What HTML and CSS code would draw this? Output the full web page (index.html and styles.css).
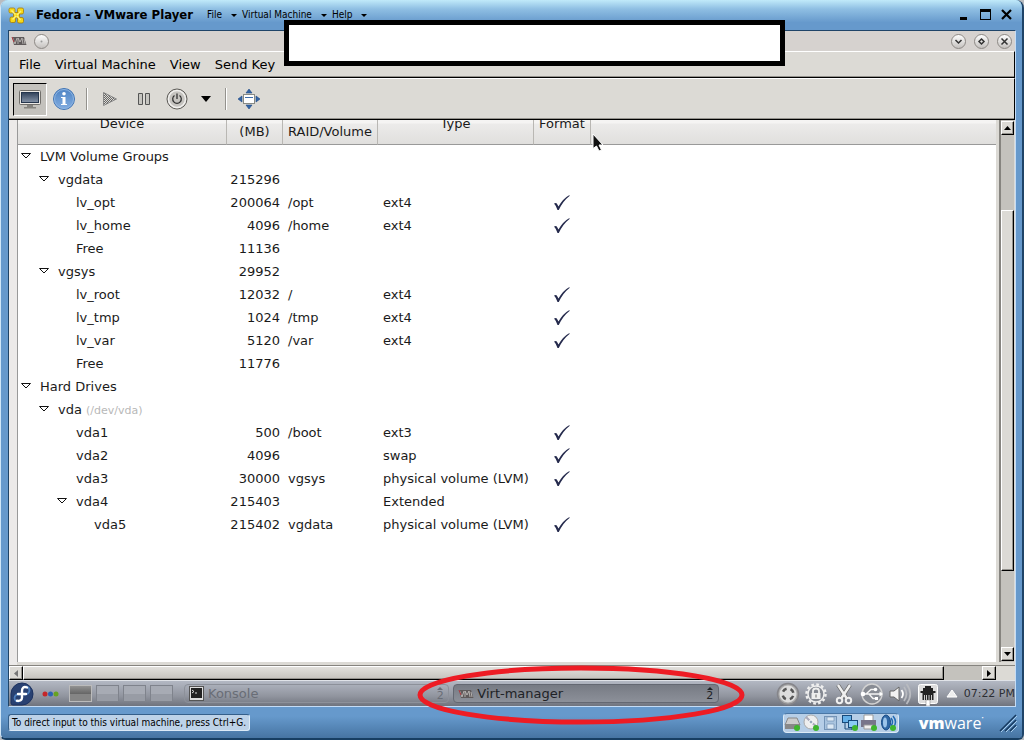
FILE: index.html
```html
<!DOCTYPE html>
<html lang="en">
<head>
<meta charset="utf-8">
<title>Fedora - VMware Player</title>
<link rel="stylesheet" href="styles.css">
</head>
<body>
<svg width="0" height="0" class="defs" aria-hidden="true">
  <defs>
    <linearGradient id="screen" x1="0" y1="0" x2="0" y2="1"><stop offset="0" stop-color="#31425a"/><stop offset="1" stop-color="#8794a8"/></linearGradient>
    <linearGradient id="info" x1="0" y1="0" x2="0" y2="1"><stop offset="0" stop-color="#4d83c4"/><stop offset="1" stop-color="#83ade0"/></linearGradient>
    <pattern id="dots" width="2" height="2" patternUnits="userSpaceOnUse"><path d="M0 0h1v1H0zM1 1h1v1H1z" fill="#666"/></pattern>
    <symbol id="check" viewBox="0 0 16 16"><path d="M0 8.500Q2 7.500 2.800 8.500L4.500 11.500Q9 3.500 15.500 0V1Q9 6 4.800 15H3.500Q2 10.500 0 8.500Z" fill="#262b4d"/></symbol>
    <symbol id="tri" viewBox="0 0 12 8"><path d="M1.500 1.500H10.500L6 6Z" fill="#fff" stroke="#111" stroke-width="1"/></symbol>
    <symbol id="vmm" viewBox="0 0 16 10"><path d="M1 1H13L15.500 9H3Z" fill="#5f5a5b"/><path d="M1.500 1.500L4 8L6 2M7 8V2L9 6L11 2L12 8M13 3L14 8" fill="none" stroke="#c9c5c3" stroke-width=".8"/><path d="M1 1L3 6" stroke="#ac343b"/></symbol>
  </defs>
</svg>
<div class="window">
  <header class="titlebar">
    <svg class="vmlogo" width="17" height="17" viewBox="0 0 17 17"><g fill="#f7d917" stroke="#a67b09" stroke-width=".8"><rect x="1" y="1" width="6" height="5" rx="1.500"/><rect x="9.500" y="1" width="6" height="6" rx="1.500"/><rect x="5.500" y="5.500" width="6" height="5.500" rx="1.500"/><rect x="2" y="10" width="5.500" height="5.500" rx="1.500"/><rect x="9.500" y="10.500" width="6" height="5.500" rx="1.500"/></g><path d="M3.500 3.500L7.500 7.500M13 4L9 8M4.500 12.500L8 9M12.500 13L9 9" stroke="#fff27a" stroke-width="1.500"/></svg>
    <h1>Fedora - VMware Player</h1>
    <nav class="hostmenu">
      <button>File<i></i></button><button>Virtual Machine<i></i></button><button>Help<i></i></button>
    </nav>
    <div class="winctl">
      <button aria-label="Minimize"><svg width="12" height="12"><path d="M1 8h7v3H1z"/></svg></button>
      <button aria-label="Maximize"><svg width="12" height="12"><path d="M0 0H11V11H0ZM1 3V10H10V3Z" fill-rule="evenodd"/></svg></button>
      <button aria-label="Close"><svg width="12" height="12"><path d="M1 1L10 10M10 1L1 10" stroke="#000" stroke-width="2.200"/></svg></button>
    </div>
  </header>

  <main class="guest">
    <div class="guesttitle">
      <svg width="16" height="10"><use href="#vmm"/></svg>
      <button class="round" aria-label="Pin"><svg width="9" height="9"><circle cx="4.500" cy="4.500" r="1" fill="#999"/></svg></button>
      <span class="spacer"></span>
      <button class="round" aria-label="Minimize guest"><svg width="9" height="9"><path d="M1.500 3L4.500 6L7.500 3" fill="none" stroke="#333" stroke-width="1.500"/></svg></button>
      <button class="round" aria-label="Maximize guest"><svg width="9" height="9"><path d="M4.500 2L7 4.500L4.500 7L2 4.500Z" fill="none" stroke="#333" stroke-width="1.500"/></svg></button>
      <button class="round" aria-label="Close guest"><svg width="9" height="9"><path d="M1.500 1.500L7.500 7.500M7.500 1.500L1.500 7.500" stroke="#333" stroke-width="1.500"/></svg></button>
    </div>
    <nav class="guestmenu"><button>File</button><button>Virtual Machine</button><button>View</button><button>Send Key</button></nav>
    <div class="toolbar">
      <button class="pressed" aria-label="Console"><svg width="24" height="22" viewBox="0 0 24 22"><rect x="1.500" y="2.500" width="21" height="14" rx="1" fill="#ece9e4" stroke="#706e6a"/><rect x="3.500" y="4.500" width="17" height="10" fill="url(#screen)" stroke="#26364d"/><path d="M9 17H15V19H18V20.500H6V19H9Z" fill="#86847f"/></svg></button>
      <button class="infobtn" aria-label="Details"><svg width="22" height="22" viewBox="0 0 22 22"><circle cx="11" cy="11" r="10.500" fill="url(#info)" stroke="#4275b4"/><circle cx="11" cy="11" r="9.500" fill="none" stroke="#8eb4e0"/><path d="M8 9H12.500V16H14V17H8V16H9.500V10H8Z" fill="#fff"/><circle cx="11" cy="5.700" r="1.800" fill="#fff"/></svg></button>
      <span class="sep"></span>
      <button class="play" aria-label="Run"><svg width="16" height="16"><path d="M1.500 1.500L14.500 8L1.500 14.500Z" fill="url(#dots)" stroke="#888"/></svg></button>
      <button class="pause" aria-label="Pause"><svg width="14" height="14"><path d="M1.500 1.500H5.500V12.500H1.500ZM8.500 1.500H12.500V12.500H8.500Z" fill="#c6c5c0" stroke="#555"/></svg></button>
      <button class="power" aria-label="Shut down"><svg width="22" height="22" viewBox="0 0 22 22"><circle cx="11" cy="11" r="10" fill="#c6c4c0" stroke="#5d5b57"/><circle cx="11" cy="11" r="8.500" fill="none" stroke="#f1f0ee" stroke-width="1.500"/><path d="M8.500 7.500A4.300 4.300 0 1 0 13.500 7.500M11 5.500V11" fill="none" stroke="#333" stroke-width="1.300"/></svg></button>
      <button class="drop" aria-label="Shutdown options"><svg width="10" height="6"><path d="M0 0H10L5 6Z"/></svg></button>
      <span class="sep"></span>
      <button class="full" aria-label="Full screen"><svg width="22" height="20" viewBox="0 0 22 20"><path d="M11 0L14 4H8ZM11 20L14 16H8ZM0 10L4 7V13ZM22 10L18 7V13Z" fill="#3465a4" stroke="#204a87" stroke-width=".6"/><rect x="5.500" y="5.500" width="11" height="9" fill="#fff" stroke="#888a85"/><path d="M7 8.500H15" stroke="#3f6eaa"/></svg></button>
    </div>

    <div class="content">
      <div class="view">
        <table>
          <colgroup><col class="c1"><col class="c2"><col class="c3"><col class="c4"><col class="c5"><col></colgroup>
          <thead><tr><th>Device</th><th class="low">(MB)</th><th class="low">RAID/Volume</th><th>Type</th><th>Format</th><th></th></tr></thead>
          <tbody>
            <tr><td><button class="tg" aria-label="Collapse LVM Volume Groups"><svg width="12" height="8"><use href="#tri"/></svg></button>LVM Volume Groups</td><td></td><td></td><td></td><td></td><td></td></tr>
            <tr><td class="l1"><button class="tg" aria-label="Collapse vgdata"><svg width="12" height="8"><use href="#tri"/></svg></button>vgdata</td><td>215296</td><td></td><td></td><td></td><td></td></tr>
            <tr><td class="leaf">lv_opt</td><td>200064</td><td>/opt</td><td>ext4</td><td><svg width="16" height="16"><use href="#check"/></svg></td><td></td></tr>
            <tr><td class="leaf">lv_home</td><td>4096</td><td>/home</td><td>ext4</td><td><svg width="16" height="16"><use href="#check"/></svg></td><td></td></tr>
            <tr><td class="leaf">Free</td><td>11136</td><td></td><td></td><td></td><td></td></tr>
            <tr><td class="l1"><button class="tg" aria-label="Collapse vgsys"><svg width="12" height="8"><use href="#tri"/></svg></button>vgsys</td><td>29952</td><td></td><td></td><td></td><td></td></tr>
            <tr><td class="leaf">lv_root</td><td>12032</td><td>/</td><td>ext4</td><td><svg width="16" height="16"><use href="#check"/></svg></td><td></td></tr>
            <tr><td class="leaf">lv_tmp</td><td>1024</td><td>/tmp</td><td>ext4</td><td><svg width="16" height="16"><use href="#check"/></svg></td><td></td></tr>
            <tr><td class="leaf">lv_var</td><td>5120</td><td>/var</td><td>ext4</td><td><svg width="16" height="16"><use href="#check"/></svg></td><td></td></tr>
            <tr><td class="leaf">Free</td><td>11776</td><td></td><td></td><td></td><td></td></tr>
            <tr><td><button class="tg" aria-label="Collapse Hard Drives"><svg width="12" height="8"><use href="#tri"/></svg></button>Hard Drives</td><td></td><td></td><td></td><td></td><td></td></tr>
            <tr><td class="l1"><button class="tg" aria-label="Collapse vda"><svg width="12" height="8"><use href="#tri"/></svg></button>vda <small>(/dev/vda)</small></td><td></td><td></td><td></td><td></td><td></td></tr>
            <tr><td class="leaf">vda1</td><td>500</td><td>/boot</td><td>ext3</td><td><svg width="16" height="16"><use href="#check"/></svg></td><td></td></tr>
            <tr><td class="leaf">vda2</td><td>4096</td><td></td><td>swap</td><td><svg width="16" height="16"><use href="#check"/></svg></td><td></td></tr>
            <tr><td class="leaf">vda3</td><td>30000</td><td>vgsys</td><td>physical volume (LVM)</td><td><svg width="16" height="16"><use href="#check"/></svg></td><td></td></tr>
            <tr><td class="l2"><button class="tg" aria-label="Collapse vda4"><svg width="12" height="8"><use href="#tri"/></svg></button>vda4</td><td>215403</td><td></td><td>Extended</td><td></td><td></td></tr>
            <tr><td class="leaf deep">vda5</td><td>215402</td><td>vgdata</td><td>physical volume (LVM)</td><td><svg width="16" height="16"><use href="#check"/></svg></td><td></td></tr>
          </tbody>
        </table>
      </div>
      <div class="vscroll">
        <button aria-label="Scroll up"><svg width="7" height="4"><path d="M0 4L3.500 0L7 4Z"/></svg></button>
        <div class="vtrack"><div class="thumb"></div></div>
        <button aria-label="Scroll down"><svg width="7" height="4"><path d="M0 0L3.500 4L7 0Z"/></svg></button>
      </div>
      <svg class="pointer" width="14" height="20" viewBox="0 0 14 20"><path d="M1 1L11 12H7L9.500 17L7 18L4.500 13L1 15.500Z" fill="#111" stroke="#fff"/></svg>
    </div>

    <div class="hscroll">
      <button aria-label="Scroll left"><svg width="4" height="7"><path d="M4 0L0 3.500L4 7Z" fill="#777"/></svg></button>
      <div class="htrack"><div class="thumb"></div></div>
      <button aria-label="Scroll right"><svg width="4" height="7"><path d="M0 0L4 3.500L0 7Z"/></svg></button>
    </div>

    <div class="taskbar">
      <button class="fedora" aria-label="Fedora menu"><svg width="24" height="24" viewBox="0 0 24 24"><path d="M12 1A11 11 0 1 1 12 23H3Q1 23 1 21V12A11 11 0 0 1 12 1Z" fill="#294172" stroke="#1d3260"/><path d="M10 12.500Q5 12 4.500 16Q5 20 9 19.500M14 12.500Q19.500 12.500 19.500 8Q19 5 16 4.500" fill="none" stroke="#4d7ebd" stroke-width="1.800"/><path d="M17 5.500C13.500 4.200 12 6 12 9V15.500Q11.800 19.500 7 18.700M8 12H16" fill="none" stroke="#fff" stroke-width="2.400" stroke-linecap="round"/></svg></button>
      <button class="beads" aria-label="Activities"><svg width="17" height="6"><circle cx="3" cy="3" r="2.500" fill="#c52629"/><circle cx="8.500" cy="3" r="2.500" fill="#2d62b5"/><circle cx="14" cy="3" r="2.500" fill="#67a321"/></svg></button>
      <div class="pager"><button class="on" aria-label="Desktop 1"></button><button aria-label="Desktop 2"></button><button aria-label="Desktop 3"></button><button aria-label="Desktop 4"></button></div>
      <div class="tasks">
        <button class="task"><svg width="15" height="15"><rect x=".5" y=".5" width="14" height="14" fill="#ddd" stroke="#555"/><rect x="2" y="2" width="11" height="10" fill="#222"/><path d="M3 4L5 5.500L3 7M6 7H8" fill="none" stroke="#ddd"/></svg><span>Konsole</span><span class="count"><svg width="8" height="3" viewBox="0 0 8 3"><path d="M1 3L4 0L7 3Z" fill="currentColor"/></svg>2</span></button>
        <div class="marked">
          <button class="task active"><svg width="16" height="10"><use href="#vmm"/></svg><span>Virt-manager</span><span class="count"><svg width="8" height="3" viewBox="0 0 8 3"><path d="M1 3L4 0L7 3Z" fill="currentColor"/></svg>2</span></button>
          <svg class="ellipse" viewBox="0 0 328 60" preserveAspectRatio="none"><ellipse cx="164" cy="30" rx="161" ry="27" fill="none" stroke="#ed1c24" stroke-width="5"/></svg>
        </div>
      </div>
      <div class="tray">
        <svg width="24" height="24" viewBox="0 0 24 24"><circle cx="12" cy="12" r="10.500" fill="#aaa" stroke="#85858a" stroke-width="1.500"/><circle cx="12" cy="12" r="8.500" fill="#ddd"/><circle cx="12" cy="12" r="5.500" fill="none" stroke="#555" stroke-width="2.500" stroke-dasharray="4.500 4.140" stroke-dashoffset="-2"/></svg>
        <svg width="24" height="24" viewBox="0 0 24 24"><circle cx="12" cy="12" r="9.500" fill="none" stroke="#eee" stroke-width="2.500" stroke-dasharray="2.700 2.270"/><circle cx="12" cy="12" r="8" fill="#858992" stroke="#eee" stroke-width="1.500"/><rect x="7.500" y="11" width="9" height="6" fill="#eee"/><path d="M9 11V9Q9 6.500 12 6.500T15 9V11" fill="none" stroke="#eee" stroke-width="1.800"/><path d="M12 12.500V15.500" stroke="#666"/></svg>
        <svg width="24" height="24" viewBox="0 0 24 24"><path d="M6 3L14.500 16M18 3L9.500 16" stroke="#666" stroke-width="4"/><path d="M6 3L14.500 16M18 3L9.500 16" stroke="#f0f0f0" stroke-width="2.500"/><g fill="none" stroke="#f0f0f0" stroke-width="2"><circle cx="7.500" cy="18.500" r="2.700"/><circle cx="16.500" cy="18.500" r="2.700"/></g></svg>
        <svg width="24" height="24" viewBox="0 0 24 24"><circle cx="12" cy="12" r="10" fill="#888c94" stroke="#d2d2d2" stroke-width="1.500"/><path d="M2 12H21M6 12L11 7.500H15M9 12L13 16.500H16" fill="none" stroke="#f3f3f3" stroke-width="1.500"/><circle cx="3" cy="12" r="2.300" fill="#fff"/><circle cx="15.500" cy="7.500" r="1.800" fill="#fff"/><path d="M15 15H18V18H15ZM19.500 9.500L23 12L19.500 14.500Z" fill="#fff"/></svg>
        <svg width="24" height="24" viewBox="0 0 24 24"><path d="M2 9H6L11 5V19L6 15H2Z" fill="#f2f2f2" stroke="#666"/><path d="M13.500 8Q16.500 12 13.500 16" fill="none" stroke="#fff" stroke-width="1.800"/><path d="M16 5Q21 12 16 19M18.500 2Q26 12 18.500 22" fill="none" stroke="#b9bbc0" stroke-width="1.700"/></svg>
        <svg width="24" height="24" viewBox="0 0 24 24"><rect x="2.500" y="2.500" width="19" height="19" rx="2" fill="#dedede" stroke="#fff"/><path d="M4.500 9H7V6H9V4H15V6H17V9H19.500V11H17.500V18H6.500V11H4.500Z" fill="#222"/><path d="M8.500 13V18M10.500 13V18M13 13V18M15.500 13V18" stroke="#ccc"/><path d="M10 18H14V24H10Z" fill="#fff" stroke="#777" stroke-width=".5"/></svg>
        <svg class="up" width="12" height="9"><path d="M1 8L6 1L11 8Z" fill="#eee" stroke="#fff"/></svg>
        <time>07:22 PM</time>
      </div>
    </div>
  </main>

  <footer class="status">
    <p>To direct input to this virtual machine, press Ctrl+G.</p>
    <div class="devices">
      <svg width="19" height="18"><path d="M4 4H13L16 11H1Z" fill="#ccc" stroke="#888"/><rect x="1" y="10" width="15" height="5" fill="#888"/><circle cx="13" cy="14" r="3" fill="#3fb52e"/></svg>
      <svg width="19" height="18"><circle cx="8" cy="8" r="7" fill="#eee" stroke="#aaa"/><path d="M8 8L3 3M8 8L13 12" stroke="#aab" stroke-width="2"/><circle cx="8" cy="8" r="2" fill="#9ab" stroke="#fff"/><circle cx="13" cy="14" r="3" fill="#3fb52e"/></svg>
      <svg width="19" height="18"><rect x="2.500" y="2.500" width="12" height="13" fill="#a9c4df" stroke="#7393b6"/><path d="M5 3H12V7H5ZM5 10H12V15H5Z" fill="#dce9f4" stroke="#7393b6" stroke-width=".7"/></svg>
      <svg width="19" height="18"><rect x="1.500" y="1.500" width="9" height="7" fill="#65b0e8" stroke="#184a7b"/><rect x="7.500" y="6.500" width="9" height="7" fill="#8acbf4" stroke="#184a7b"/><path d="M4 9V15H11M11 14V16" fill="none" stroke="#184a7b"/><circle cx="14" cy="14" r="3" fill="#3fb52e"/></svg>
      <svg width="19" height="18"><path d="M4 1H13V7H4Z" fill="#fff" stroke="#999"/><path d="M1 6H16V13H1Z" fill="#77758a"/><path d="M4 11H13V15H4Z" fill="#eee" stroke="#999"/><circle cx="14" cy="14" r="3" fill="#3fb52e"/></svg>
      <svg width="19" height="18"><ellipse cx="7" cy="8.500" rx="4.500" ry="7.500" fill="#2f67a5" stroke="#174a85"/><ellipse cx="6" cy="8.500" rx="2" ry="5" fill="#9cc4ea"/><path d="M12 4Q15 8 12 12M14 2Q19 8 14 14" fill="none" stroke="#216ab3" stroke-width="1.500"/><circle cx="14" cy="14" r="3" fill="#3fb52e"/></svg>
    </div>
    <div class="brand"><b>vm</b>ware<sup>·</sup></div>
    <svg class="grip" width="18" height="18"><path d="M1 17L17 1M6 17L17 6M11 17L17 11" stroke="#16395f" stroke-width="1.500"/><path d="M2 18L18 2M7 18L18 7M12 18L18 12" stroke="#a9cdec"/></svg>
  </footer>
  <div class="redaction"></div>
</div>
</body>
</html>
```
FILE: styles.css
```css
* { box-sizing: border-box; }
body { margin: 0; background: #b9bcc0; font-family: "DejaVu Sans", sans-serif; font-size: 13px; color: #1a1a1a; }
button { margin: 0; padding: 0; border: 0; background: none; font: inherit; color: inherit; display: flex; align-items: center; justify-content: center; }
svg { display: block; flex: none; }
.defs { position: absolute; }
.window { position: relative; display: flex; flex-direction: column; height: 100vh; overflow: hidden; background: #6699cc; border-radius: 8px 8px 6px 6px; border-left: 1px solid #cfe6f8; border-right: 2px solid #1f4468; border-bottom: 2px solid #173e62; }
.titlebar { display: flex; align-items: center; height: 30px; padding: 0 9px 0 7px; background: linear-gradient(#c0eafa, #8fbfe3 30%, #6699cc 75%); color: #000; flex: none; font-family: "DejaVu Sans Condensed", "DejaVu Sans", sans-serif; }
.titlebar h1 { margin: 0 0 0 11px; font-size: 13px; line-height: 16px; font-weight: bold; }
.hostmenu { display: flex; gap: 5px; margin-left: 14px; font-size: 10px; line-height: 14px; }
.hostmenu button { gap: 9px; }
.hostmenu i { border: 3px solid transparent; border-top-color: #000; border-bottom: 0; }
.winctl { display: flex; gap: 9px; margin-left: auto; }
.guest { flex: 1; min-height: 0; display: flex; flex-direction: column; margin: 0 6px 0 7px; border-top: 1px solid #1f4468; border-left: 1px solid #1f4468; border-right: 1px solid #c4dcf6; border-bottom: 1px solid #c4dcf6; background: #dcdad5; }
.guesttitle { display: flex; align-items: center; height: 20px; padding: 0 2px; background: #d6d2cf; gap: 7px; flex: none; }
.spacer { flex: 1; }
.round { width: 15px; height: 15px; border-radius: 50%; border: 1px solid #8d8985; background: linear-gradient(#fdfdfd, #c5c2bf); margin-right: 1px; }
.guestmenu { display: flex; gap: 14px; height: 27px; padding: 0 10px 1px; border-top: 1px solid #fff; border-bottom: 1px solid #000; border-right: 1px solid #000; box-shadow: inset 0 -1px #94928d; flex: none; color: #000; }
.toolbar { display: flex; align-items: center; height: 42px; padding: 0 4px; border-top: 1px solid #fff; border-bottom: 1px solid #000; border-right: 1px solid #000; box-shadow: inset 0 -1px #94928d; flex: none; }
.pressed { width: 34px; height: 33px; background: #c4c2bd; border: 1px solid #fff; border-top-color: #000; border-left-color: #000; }
.infobtn { margin-left: 6px; }
.sep { width: 2px; height: 22px; border-left: 1px solid #94928d; border-right: 1px solid #fff; margin-left: 11px; }
.play { margin-left: 14px; }
.pause { margin-left: 19px; }
.power { margin-left: 15px; }
.drop { margin-left: 13px; }
.drop + .sep { margin-left: 14px; }
.full { margin-left: 11px; }
.content { position: relative; display: flex; flex: 1; min-height: 0; padding: 0 0 3px 8px; background: linear-gradient(90deg, #eceae9 8px, #dcdad5 8px); }
.view { flex: 1; min-width: 0; overflow: hidden; background: #fff; border-left: 1px solid #999; margin-right: 3px; }
table { table-layout: fixed; width: 100%; border-collapse: separate; border-spacing: 0; margin-top: -17px; }
.c1 { width: 209px; } .c2 { width: 56px; } .c3 { width: 95px; } .c4 { width: 156px; } .c5 { width: 57px; }
th { height: 42px; padding: 0; font-weight: normal; line-height: 17px; white-space: nowrap; background: linear-gradient(#f5f4f3 20px, #ecebea 21px, #e0dfdd); border-bottom: 1px solid #999; color: #1a1a1a; }
th:not(:last-child) { border-right: 1px solid #b9b7b3; }
th.low { vertical-align: bottom; padding-bottom: 4px; }
td { height: 23px; padding: 0 0 0 5px; line-height: 17px; white-space: nowrap; }
td:first-child { padding-left: 2px; }
td.l1 { padding-left: 20px; }
td.l2 { padding-left: 38px; }
td.leaf { padding-left: 58px; }
td.deep { padding-left: 76px; }
td:nth-child(2) { text-align: right; padding: 0 3px 0 0; }
td:nth-child(5) { padding-left: 20px; }
.tg { display: inline-flex; margin-right: 8px; vertical-align: 1px; }
small { font-size: 11px; color: #b8b8b8; }
.vscroll { width: 16px; display: flex; flex-direction: column; background: #c4c2bd; border-left: 2px solid #86847f; border-right: 1px solid #dcdad5; padding-top: 1px; }
.vscroll button, .hscroll button, .thumb { background: #dcdad5; border: 1px solid #000; border-top-color: #fff; border-left-color: #fff; box-shadow: inset -1px -1px #94928d; }
.vscroll button { height: 14px; flex: none; margin-bottom: 1px; }
.vtrack { flex: 1; display: flex; flex-direction: column; padding: 74px 0 76px; }
.vtrack .thumb { flex: 1; }
.hscroll { display: flex; flex: none; height: 15px; border-top: 1px solid #86847f; padding-right: 19px; }
.hscroll button { width: 14px; flex: none; }
.htrack { flex: 1; display: flex; background: #c4c2bd; }
.htrack .thumb { width: 96%; background: linear-gradient(#e2e0dc, #c5c2bd); }
.pointer { position: absolute; left: 583px; top: 13px; }
.taskbar { display: flex; align-items: center; height: 26px; padding-left: 1px; background: linear-gradient(#b3b8c3, #91959f 60%, #70747e); border-top: 1px solid #e0e3e8; flex: none; }
.beads { margin-left: 8px; }
.pager { display: flex; gap: 4px; margin-left: 10px; }
.pager button { width: 23px; height: 17px; border: 1px solid #7f838c; background: linear-gradient(#a7abb4 50%, #989ca5 50%); }
.pager .on { background: linear-gradient(#929292, #686868 50%, #858585 50%); border-color: #bbb; }
.tasks { flex: 1; display: grid; grid-template-columns: 1fr 1fr; gap: 4px; margin-left: 11px; min-width: 0; }
.task { width: 100%; height: 19px; justify-content: flex-start; gap: 4px; padding: 0 4px; border: 1px solid #8d919a; border-radius: 4px; line-height: 17px; color: #696d76; }
.task.active { gap: 3px; color: #202226; background: linear-gradient(#777b84, #8c9099); border-color: #646872; }
.count { margin-left: auto; display: flex; flex-direction: column; align-items: center; font-size: 11px; line-height: 11px; }
.marked { position: relative; }
.ellipse { position: absolute; left: -36px; top: -19px; width: 328px; height: 60px; pointer-events: none; z-index: 2; }
.tray { display: flex; align-items: center; gap: 4px; margin-left: 57px; }
.tray .up { margin: 0 2px; }
.tray time { font-size: 11px; line-height: 16px; color: #2c2e33; white-space: nowrap; }
.status { display: flex; align-items: center; height: 31px; padding: 0 5px 0 7px; background: linear-gradient(#6699cc 30%, #4674a2); flex: none; }
.status p { margin: 0; padding: 0 3px; height: 17px; background: #bdd2e8; border: 1px solid #dcebf8; border-top-color: #355f8a; border-left-color: #355f8a; border-radius: 3px; font-family: "DejaVu Sans Condensed", "DejaVu Sans", sans-serif; font-size: 10px; line-height: 15px; color: #000; white-space: nowrap; }
.devices { display: flex; align-items: center; height: 20px; margin-left: auto; background: #b6cee7; border: 1px solid #dcebf8; border-top-color: #4a77a6; border-radius: 4px; }
.brand { margin-left: 20px; font-family: "Open Sans", sans-serif; font-size: 16px; line-height: 20px; color: #fff; display: flex; }
.brand b { font-weight: 800; }
.brand sup { font-size: 10px; line-height: 8px; }
.grip { margin-left: 15px; }
.redaction { position: absolute; left: 283px; top: 20px; width: 501px; height: 46px; border: 5px solid #000; background: #fff; }
```
